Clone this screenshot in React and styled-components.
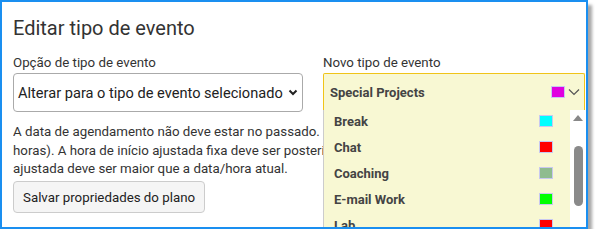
import styled, { createGlobalStyle } from 'styled-components';

const GlobalStyle = createGlobalStyle`
    body {
        margin: 0;
        background: #ffffff;
        font-family: Roboto, "Liberation Sans", Arial, sans-serif;
    }
`;

const eventTypes = [
    { name: 'Break', color: '#00ffff' },
    { name: 'Chat', color: '#ff0000' },
    { name: 'Coaching', color: '#8fbc8f' },
    { name: 'E-mail Work', color: '#00ff00' },
    { name: 'Lab', color: '#ff0000' },
];

const Chevron = () => (
    <svg width="12" height="8" viewBox="0 0 12 8">
        <path d="M1 1.5 L6 6.5 L11 1.5" fill="none" stroke="#555" strokeWidth="1.2" />
    </svg>
);

const App = () => {
    return (
        <>
            <GlobalStyle />
            <Window>
                <Title>Editar tipo de evento</Title>
                <Columns>
                    <Column>
                        <Label>Opção de tipo de evento</Label>
                        <Select>
                            <span>Alterar para o tipo de evento selecionado</span>
                            <svg width="10" height="7" viewBox="0 0 10 7">
                                <path d="M1.5 1.5 L5 5 L8.5 1.5" fill="none" stroke="#222" strokeWidth="2" />
                            </svg>
                        </Select>
                        <Notice>
                            A data de agendamento não deve estar no passado. (Mais de 24
                            horas). A hora de início ajustada fixa deve ser posterior à data/hora
                            ajustada deve ser maior que a data/hora atual.
                        </Notice>
                        <Button>Salvar propriedades do plano</Button>
                    </Column>
                    <Column>
                        <Label>Novo tipo de evento</Label>
                        <Picker>
                            <PickerHeader>
                                <ItemName>Special Projects</ItemName>
                                <Swatch $color="#e000e0" />
                                <Chevron />
                            </PickerHeader>
                            <List>
                                <Items>
                                    {eventTypes.map((item) => (
                                        <Item key={item.name}>
                                            <ItemName>{item.name}</ItemName>
                                            <Swatch $color={item.color} />
                                        </Item>
                                    ))}
                                </Items>
                                <Scrollbar>
                                    <ArrowUp />
                                    <Thumb />
                                </Scrollbar>
                            </List>
                        </Picker>
                    </Column>
                </Columns>
            </Window>
        </>
    );
}

export default App;

const Window = styled.div`
    box-sizing: border-box;
    width: 588px;
    height: 229px;
    border: 2px solid #1a8ff0;
    box-shadow: 4px 5px 3px rgba(0, 0, 0, 0.35);
    overflow: hidden;
    background: #fff;
    padding: 0 0 0 11px;
    color: #333;
`;

const Title = styled.div`
    font-size: 20px;
    line-height: 24px;
    margin-top: 14px;
    color: #333;
`;

const Columns = styled.div`
    display: grid;
    grid-template-columns: 290px 262px;
    column-gap: 20px;
    margin-top: 15px;
`;

const Column = styled.div`
    display: flex;
    flex-direction: column;
    align-items: flex-start;
    min-width: 0;
`;

const Label = styled.div`
    font-size: 13.3px;
    line-height: 16px;
    color: #333;
    margin-bottom: 2px;
`;

const Select = styled.div`
    box-sizing: border-box;
    width: 290px;
    height: 39px;
    border: 1px solid #aaa;
    border-radius: 4px;
    display: flex;
    align-items: center;
    justify-content: space-between;
    padding: 0 4px 0 4px;
    font-size: 14.6px;
    color: #222;
    white-space: nowrap;
`;

const Notice = styled.div`
    font-size: 13.3px;
    line-height: 18.5px;
    color: #333;
    margin-top: 11px;
    width: 400px;
    height: 56px;
    overflow: hidden;
`;

const Button = styled.button`
    margin-top: 2px;
    height: 32px;
    padding: 0 9px;
    font-family: inherit;
    font-size: 13.3px;
    color: #222;
    background: #f5f5f5;
    border: 1px solid #ccc;
    border-radius: 4px;
`;

const Picker = styled.div`
    position: relative;
    width: 262px;
    z-index: 2;
`;

const PickerHeader = styled.div`
    box-sizing: border-box;
    height: 38px;
    background: #f8f8d3;
    border: 1px solid #f0c419;
    border-bottom: 1px solid #ccc;
    border-radius: 2px 2px 0 0;
    display: flex;
    align-items: center;
    padding: 0 4px 0 6px;
    gap: 3px;
`;

const ItemName = styled.span`
    font-size: 13px;
    font-weight: 700;
    color: #444;
    flex: 1;
`;

const Swatch = styled.span`
    box-sizing: border-box;
    width: 14px;
    height: 12px;
    border: 1px solid #c8c8f0;
    background: ${(p) => p.$color};
`;

const List = styled.div`
    position: absolute;
    top: 37px;
    left: 0;
    width: 262px;
    height: 140px;
    display: flex;
    background: #f8f8d3;
    border-left: 1px solid #ccc;
`;

const Items = styled.div`
    flex: 1;
    display: flex;
    flex-direction: column;
    margin-top: -2px;
`;

const Item = styled.div`
    flex: none;
    height: 26px;
    display: flex;
    align-items: center;
    padding: 0 17px 0 10px;
`;

const Scrollbar = styled.div`
    width: 16px;
    background: #fff;
    display: flex;
    flex-direction: column;
    align-items: center;
    padding-top: 5px;
`;

const ArrowUp = styled.div`
    width: 0;
    height: 0;
    border-left: 5px solid transparent;
    border-right: 5px solid transparent;
    border-bottom: 6px solid #888;
`;

const Thumb = styled.div`
    margin-top: 25px;
    width: 9px;
    height: 60px;
    border-radius: 5px;
    background: #8a8a8a;
`;
